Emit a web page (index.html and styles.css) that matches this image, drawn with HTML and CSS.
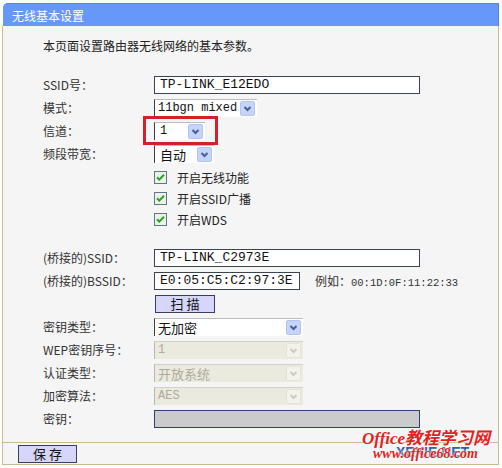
FILE: index.html
```html
<!DOCTYPE html>
<html lang="zh-CN">
<head>
  <meta charset="UTF-8">
  <title>无线基本设置</title>
  <link rel="stylesheet" href="styles.css">
</head>
<body>
  <div class="panel">
    <div class="panel-title">无线基本设置</div>

    <div class="panel-body">
      <p class="intro">本页面设置路由器无线网络的基本参数。</p>

      <div class="row">
        <span class="label">SSID号：</span>
        <div class="text-box w-long">TP-LINK_E12EDO</div>
      </div>
      <div class="row">
        <span class="label">模式：</span>
        <div class="select w-mode">
          <span class="select-text">11bgn mixed</span>
          <svg class="arrow" width="15" height="15" viewBox="0 0 15 15"><rect x="0.5" y="0.5" width="14" height="14" rx="1.5" fill="#c4d4fb" stroke="#b3c5ef"/><path d="M4.5 6 L7.5 9 L10.5 6" fill="none" stroke="#4a5f8c" stroke-width="2"/></svg>
        </div>
      </div>
      <div class="row">
        <span class="label">信道：</span>
        <div class="select w-channel marked">
          <span class="select-text">1</span>
          <svg class="arrow" width="15" height="15" viewBox="0 0 15 15"><rect x="0.5" y="0.5" width="14" height="14" rx="1.5" fill="#c4d4fb" stroke="#b3c5ef"/><path d="M4.5 6 L7.5 9 L10.5 6" fill="none" stroke="#4a5f8c" stroke-width="2"/></svg>
        </div>
      </div>
      <div class="row">
        <span class="label">频段带宽：</span>
        <div class="select w-band">
          <span class="select-text cjk">自动</span>
          <svg class="arrow" width="15" height="15" viewBox="0 0 15 15"><rect x="0.5" y="0.5" width="14" height="14" rx="1.5" fill="#c4d4fb" stroke="#b3c5ef"/><path d="M4.5 6 L7.5 9 L10.5 6" fill="none" stroke="#4a5f8c" stroke-width="2"/></svg>
        </div>
      </div>

      <div class="checks">
        <div class="check-row">
          <svg class="checkbox" width="13" height="13" viewBox="0 0 13 13"><rect x="0.5" y="0.5" width="12" height="12" fill="#eef0ea" stroke="#5b7a86"/><path d="M3 6.2 L5.3 8.6 L10 3.8" fill="none" stroke="#22a322" stroke-width="2"/></svg>
          <span>开启无线功能</span>
        </div>
        <div class="check-row">
          <svg class="checkbox" width="13" height="13" viewBox="0 0 13 13"><rect x="0.5" y="0.5" width="12" height="12" fill="#eef0ea" stroke="#5b7a86"/><path d="M3 6.2 L5.3 8.6 L10 3.8" fill="none" stroke="#22a322" stroke-width="2"/></svg>
          <span>开启SSID广播</span>
        </div>
        <div class="check-row">
          <svg class="checkbox" width="13" height="13" viewBox="0 0 13 13"><rect x="0.5" y="0.5" width="12" height="12" fill="#eef0ea" stroke="#5b7a86"/><path d="M3 6.2 L5.3 8.6 L10 3.8" fill="none" stroke="#22a322" stroke-width="2"/></svg>
          <span>开启WDS</span>
        </div>
      </div>

      <div class="spacer"></div>

      <div class="row">
        <span class="label">(桥接的)SSID：</span>
        <div class="text-box w-long">TP-LINK_C2973E</div>
      </div>
      <div class="row">
        <span class="label">(桥接的)BSSID：</span>
        <div class="text-box w-mac">E0:05:C5:C2:97:3E</div>
        <span class="example">例如：<span class="mono">00:1D:0F:11:22:33</span></span>
      </div>
      <div class="row">
        <span class="label"></span>
        <button class="btn btn-scan">扫 描</button>
      </div>
      <div class="row">
        <span class="label">密钥类型：</span>
        <div class="select w-key">
          <span class="select-text cjk">无加密</span>
          <svg class="arrow" width="15" height="15" viewBox="0 0 15 15"><rect x="0.5" y="0.5" width="14" height="14" rx="1.5" fill="#c4d4fb" stroke="#b3c5ef"/><path d="M4.5 6 L7.5 9 L10.5 6" fill="none" stroke="#4a5f8c" stroke-width="2"/></svg>
        </div>
      </div>
      <div class="row">
        <span class="label">WEP密钥序号：</span>
        <div class="select w-key disabled">
          <span class="select-text">1</span>
          <svg class="arrow" width="15" height="15" viewBox="0 0 15 15"><rect x="0.5" y="0.5" width="14" height="14" rx="1.5" fill="#f3f2ec" stroke="#e6e4da"/><path d="M4.5 6 L7.5 9 L10.5 6" fill="none" stroke="#cdcbbe" stroke-width="2"/></svg>
        </div>
      </div>
      <div class="row">
        <span class="label">认证类型：</span>
        <div class="select w-key disabled">
          <span class="select-text cjk">开放系统</span>
          <svg class="arrow" width="15" height="15" viewBox="0 0 15 15"><rect x="0.5" y="0.5" width="14" height="14" rx="1.5" fill="#f3f2ec" stroke="#e6e4da"/><path d="M4.5 6 L7.5 9 L10.5 6" fill="none" stroke="#cdcbbe" stroke-width="2"/></svg>
        </div>
      </div>
      <div class="row">
        <span class="label">加密算法：</span>
        <div class="select w-key disabled">
          <span class="select-text">AES</span>
          <svg class="arrow" width="15" height="15" viewBox="0 0 15 15"><rect x="0.5" y="0.5" width="14" height="14" rx="1.5" fill="#f3f2ec" stroke="#e6e4da"/><path d="M4.5 6 L7.5 9 L10.5 6" fill="none" stroke="#cdcbbe" stroke-width="2"/></svg>
        </div>
      </div>
      <div class="row">
        <span class="label">密钥：</span>
        <div class="text-box w-long locked"></div>
      </div>
    </div>

    <div class="panel-foot">
      <button class="btn btn-save">保 存</button>
    </div>
  </div>

  <!-- watermark over the footer -->
  <div class="watermark">
    <span class="wm-back">XEXIE.NET</span>
    <span class="wm-title">Office教程学习网</span>
    <span class="wm-url">www.office68.com</span>
  </div>
</body>
</html>
```

FILE: styles.css
```css
:root {
  --tan: #cdbb8f;
  --head: #6698f9;
  --panel-bg: #f5f5f5;
  --text: #222;
  --mono: "Liberation Mono", "Noto Sans CJK SC", monospace;
}

* {
  margin: 0;
  padding: 0;
  box-sizing: border-box;
}

body {
  font-family: "Noto Sans CJK SC", "Liberation Sans", sans-serif;
  font-size: 12px;
  color: var(--text);
  background: #fff;
  padding: 3px 0 0 2px;
  position: relative;
  height: 468px;
  overflow: hidden;
}

.panel {
  width: 497px;
}

.panel-title {
  height: 23px;
  line-height: 23px;
  padding-left: 9px;
  margin-left: 1px;
  background: var(--head);
  border-top: 1px solid #5a86e2;
  border-right: 1px solid #5b7fc4;
  border-radius: 5px 0 0 0;
  color: #fff;
  font-size: 12px;
}

.panel-body {
  background: var(--panel-bg);
  border-left: 1px solid var(--tan);
  border-right: 1px solid var(--tan);
  padding: 11px 0 12px 40px;
}

.intro {
  line-height: 18px;
  margin-bottom: 18px;
}

.row {
  display: flex;
  align-items: center;
  height: 23px;
}

.label {
  width: 111px;
  flex-shrink: 0;
  color: #333;
}

.text-box {
  height: 18px;
  line-height: 16px;
  padding: 0 5px;
  background: #fff;
  border: 1px solid #3b4250;
  font-family: var(--mono);
  font-size: 13px;
  color: #111;
  white-space: nowrap;
}

.w-long { width: 266px; }
.w-mac { width: 146px; }

.text-box.locked {
  background: #cbcbcb;
  border-color: #2c3f78;
}

.select {
  height: 18px;
  display: flex;
  align-items: center;
  justify-content: space-between;
  background: #fff;
  border-top: 1px solid #bcbcbc;
  border-left: 1px solid #3f3f3f;
  padding: 0 2px 0 3px;
  position: relative;
}

.select-text {
  font-family: var(--mono);
  font-size: 12px;
  color: #111;
}

.select-text.cjk {
  font-family: "Noto Sans CJK SC", sans-serif;
  font-size: 13px;
}

.w-mode { width: 103px; }
.w-channel { width: 51px; padding-left: 5px; }
.w-band { width: 60px; padding-left: 5px; }
.w-key { width: 149px; }

.select.disabled {
  background: #ebeadf;
  border-left-color: #b9b8ae;
  border-top-color: #d2d1c8;
}

.select.disabled .select-text {
  color: #aeab9c;
}

/* red annotation frame round the channel select */
.select.marked::after {
  content: "";
  position: absolute;
  left: -12px;
  right: -13px;
  top: -7px;
  bottom: -5px;
  border: 3px solid #d3202a;
}

.arrow {
  display: block;
  flex-shrink: 0;
}

.checks {
  margin-top: 2px;
}

.check-row {
  height: 21px;
  display: flex;
  align-items: center;
  gap: 10px;
  padding-left: 111px;
}

.checkbox {
  display: block;
}

.spacer {
  height: 16px;
}

.example {
  margin-left: 15px;
  color: #333;
}

.mono {
  font-family: var(--mono);
  font-size: 10.5px;
}

.btn {
  height: 18px;
  background: #d5d6fa;
  border: 1px solid #3c3c5c;
  font-family: "Noto Sans CJK SC", sans-serif;
  font-size: 13px;
  line-height: 16px;
  color: #111;
}

.btn-scan {
  width: 60px;
  margin-left: 1px;
}

.btn-save {
  width: 59px;
}

.panel-foot {
  background: var(--panel-bg);
  border: 1px solid var(--tan);
  padding: 2px 0 1px 15px;
}

.watermark {
  position: absolute;
  left: 362px;
  top: 430px;
  width: 130px;
  height: 32px;
}

.watermark span {
  position: absolute;
  white-space: nowrap;
}

.wm-back {
  left: 34px;
  top: 15px;
  font-family: "Liberation Sans", sans-serif;
  font-weight: bold;
  font-size: 14px;
  line-height: 14px;
  color: #2f5fb0;
}

.wm-title {
  left: 0;
  top: 0;
  font-family: "Liberation Serif", "Noto Sans CJK SC", serif;
  font-style: italic;
  font-weight: bold;
  font-size: 17px;
  line-height: 18px;
  color: #e3221e;
  text-shadow: 0 0 2px #fff, 0 0 2px #fff;
}

.wm-url {
  left: 11px;
  top: 17px;
  font-family: "Liberation Serif", serif;
  font-style: italic;
  font-weight: bold;
  font-size: 14px;
  line-height: 14px;
  color: #e3221e;
  text-shadow: 0 0 2px #fff, 0 0 2px #fff;
}
```
